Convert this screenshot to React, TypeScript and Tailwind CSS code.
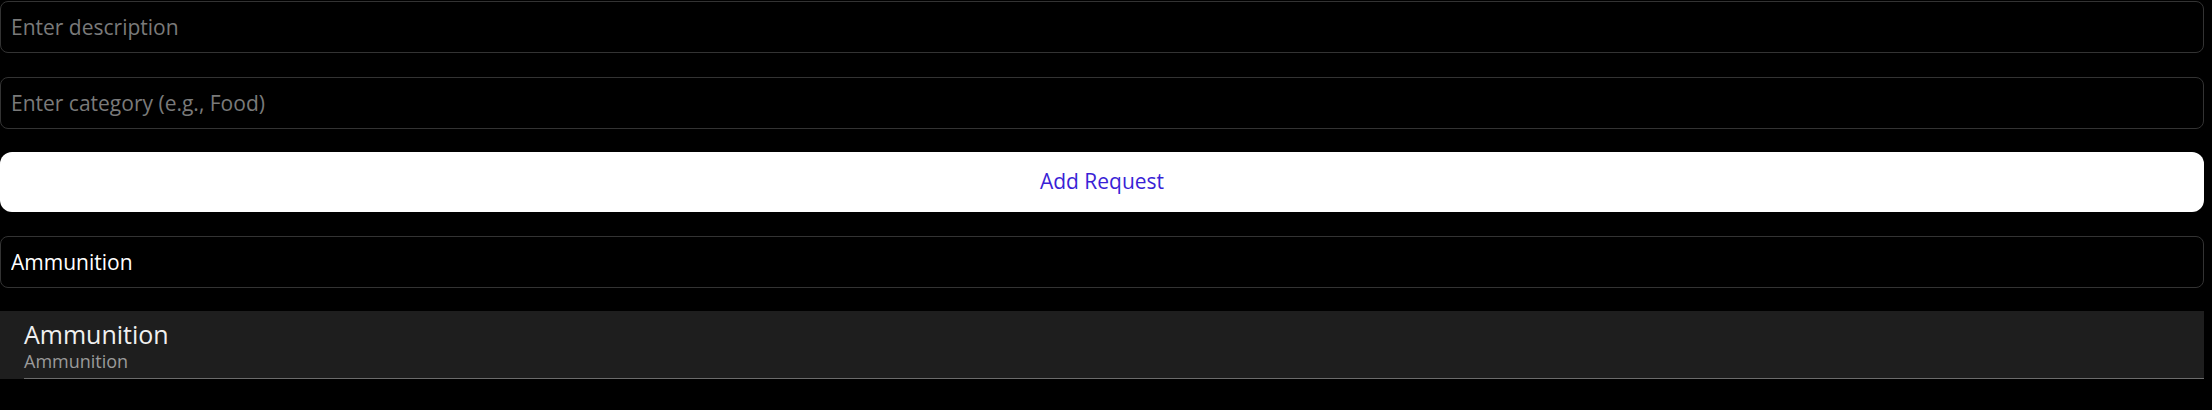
import { useState } from 'react';

const font = { fontFamily: '"Open Sans", "Noto Sans", sans-serif' };

export default function App() {
    const [description, setDescription] = useState('');
    const [category, setCategory] = useState('');
    const [filter, setFilter] = useState('Ammunition');

    const requests = [{ description: 'Ammunition', category: 'Ammunition' }];

    return (
        <div className="min-h-screen bg-black pr-2 pt-px" style={font}>
            <div className="flex flex-col gap-6">
                <input
                    value={description}
                    onChange={(e) => setDescription(e.target.value)}
                    placeholder="Enter description"
                    className="h-[52px] w-full rounded-lg border border-[#333333] bg-black px-[10px] text-[21px] text-white placeholder:text-[#7a7a7a] outline-none"
                />
                <input
                    value={category}
                    onChange={(e) => setCategory(e.target.value)}
                    placeholder="Enter category (e.g., Food)"
                    className="h-[52px] w-full rounded-lg border border-[#333333] bg-black px-[10px] text-[21px] text-white placeholder:text-[#7a7a7a] outline-none"
                />
                <button className="mt-[-1px] h-[60px] w-full rounded-xl bg-white text-[21px] text-[#3a1fd6]">
                    Add Request
                </button>
                <input
                    value={filter}
                    onChange={(e) => setFilter(e.target.value)}
                    placeholder="Filter by category"
                    className="h-[52px] w-full rounded-lg border border-[#333333] bg-black px-[10px] text-[21px] text-white placeholder:text-[#7a7a7a] outline-none"
                />
                <ul className="mt-[-1px]">
                    {requests.map((r, i) => (
                        <li key={i} className="bg-[#1e1e1e] pl-6">
                            <div className="h-[68px] border-b border-[#6b6b6b] pt-2">
                                <div className="text-[25px] leading-[30px] text-[#f0f0f0]">{r.description}</div>
                                <div className="text-[18px] leading-[24px] text-[#9a9a9a]">{r.category}</div>
                            </div>
                        </li>
                    ))}
                </ul>
            </div>
        </div>
    );
}
